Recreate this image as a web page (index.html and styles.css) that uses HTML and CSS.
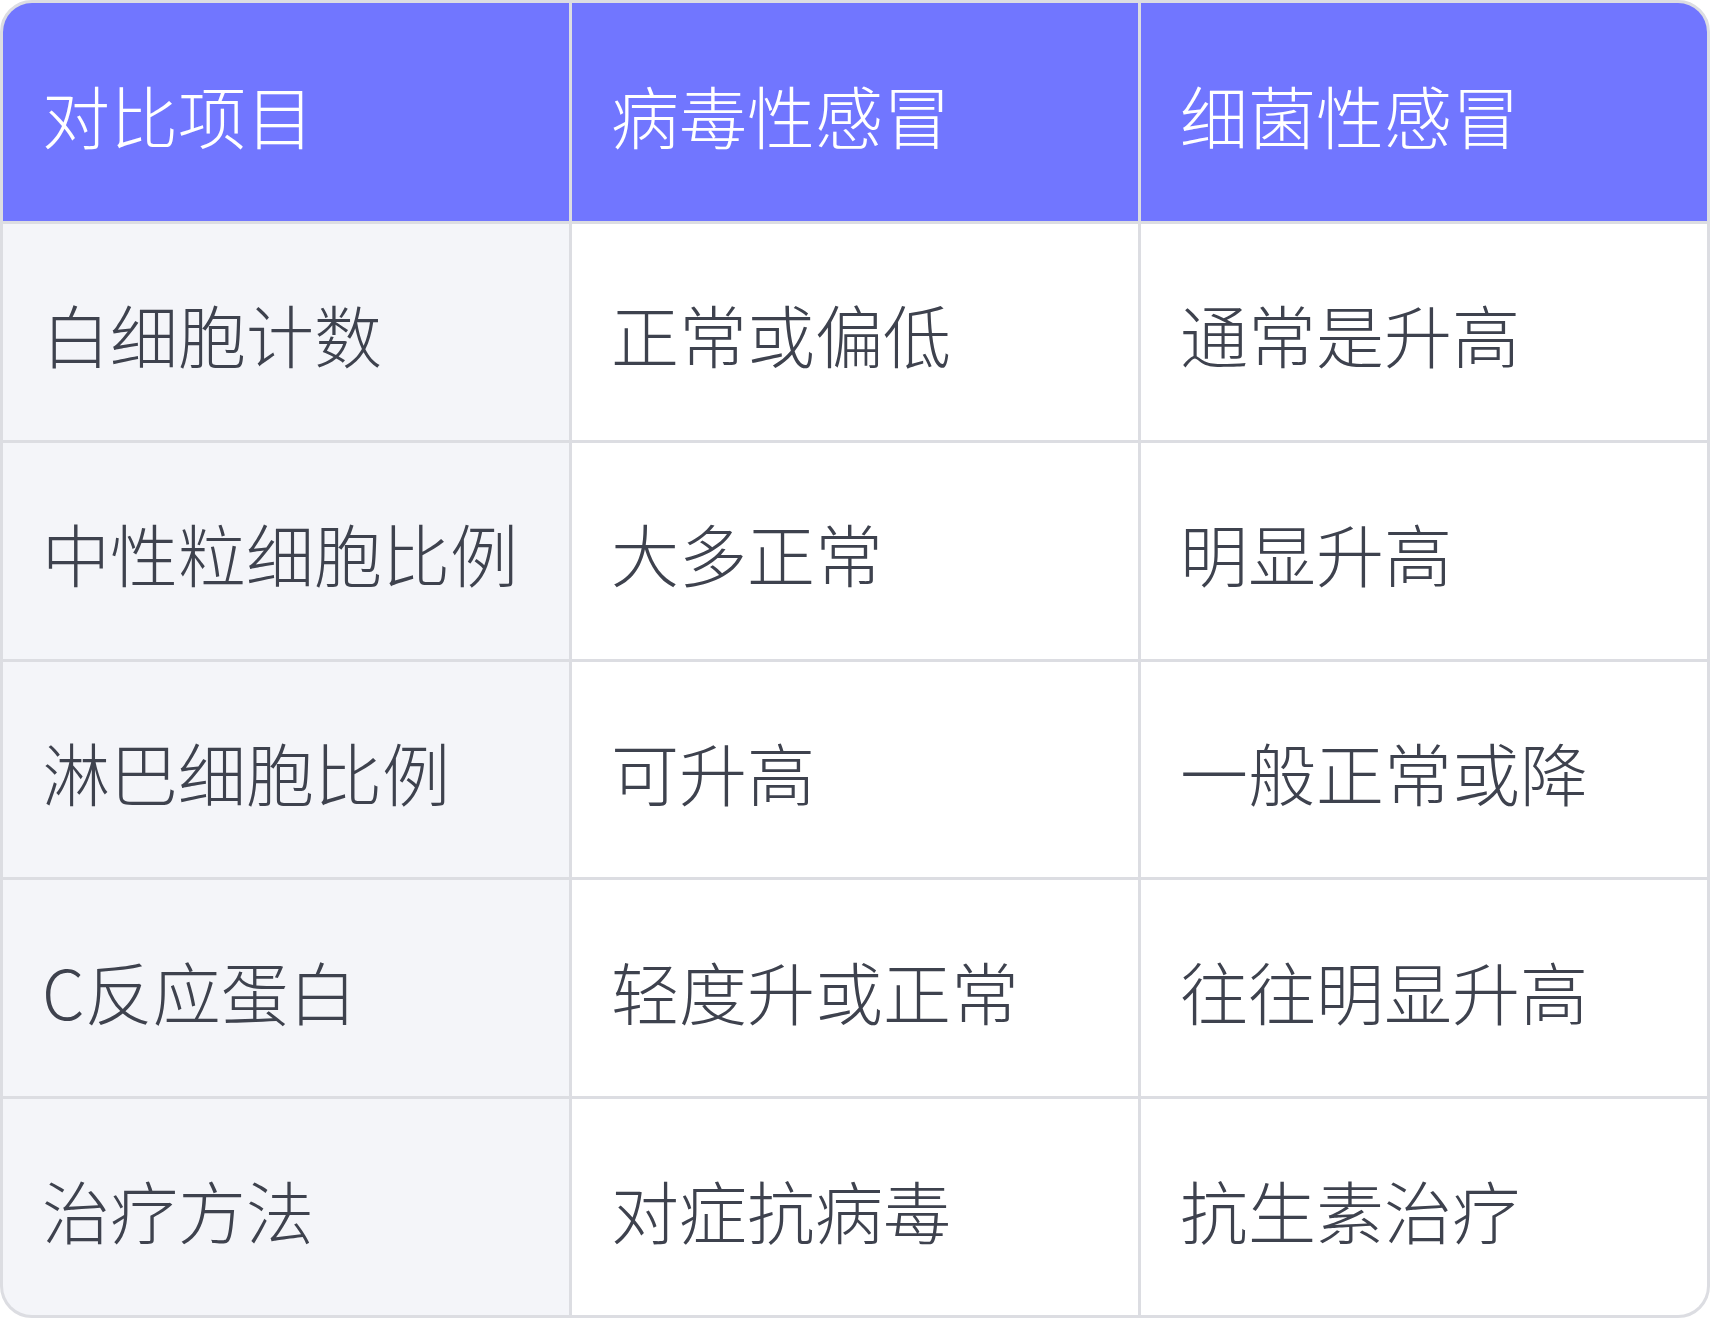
FILE: index.html
```html
<!DOCTYPE html>
<html lang="zh-CN">
<head>
<meta charset="utf-8">
<title>病毒性感冒与细菌性感冒对比</title>
<link rel="stylesheet" href="styles.css">
</head>
<body>
<div class="compare">
  <div class="cell head">对比项目</div>
  <div class="cell head">病毒性感冒</div>
  <div class="cell head">细菌性感冒</div>

  <div class="cell label">白细胞计数</div>
  <div class="cell">正常或偏低</div>
  <div class="cell">通常是升高</div>

  <div class="cell label">中性粒细胞比例</div>
  <div class="cell">大多正常</div>
  <div class="cell">明显升高</div>

  <div class="cell label">淋巴细胞比例</div>
  <div class="cell">可升高</div>
  <div class="cell">一般正常或降</div>

  <div class="cell label">C反应蛋白</div>
  <div class="cell">轻度升或正常</div>
  <div class="cell">往往明显升高</div>

  <div class="cell label">治疗方法</div>
  <div class="cell">对症抗病毒</div>
  <div class="cell">抗生素治疗</div>
</div>
</body>
</html>
```
FILE: styles.css
```css
html, body {
  margin: 0;
  padding: 0;
  background: #ffffff;
}

.compare {
  box-sizing: border-box;
  width: 1710px;
  height: 1318px;
  border: 3px solid #dcdde2;
  border-radius: 32px;
  overflow: hidden;
  display: grid;
  grid-template-columns: repeat(3, 1fr);
  grid-template-rows: 218px repeat(5, 1fr);
  gap: 3px;
  background: #dcdde2;
  font-family: "Noto Sans CJK SC", "Noto Sans", sans-serif;
}

.cell {
  display: flex;
  align-items: center;
  padding: 4px 39px 0;
  font-size: 68px;
  font-weight: 300;
  color: #3e424e;
  background: #ffffff;
  white-space: nowrap;
}

.cell.head {
  background: #7176ff;
  color: #ffffff;
}

.cell.label {
  background: #f4f5f9;
}
```
